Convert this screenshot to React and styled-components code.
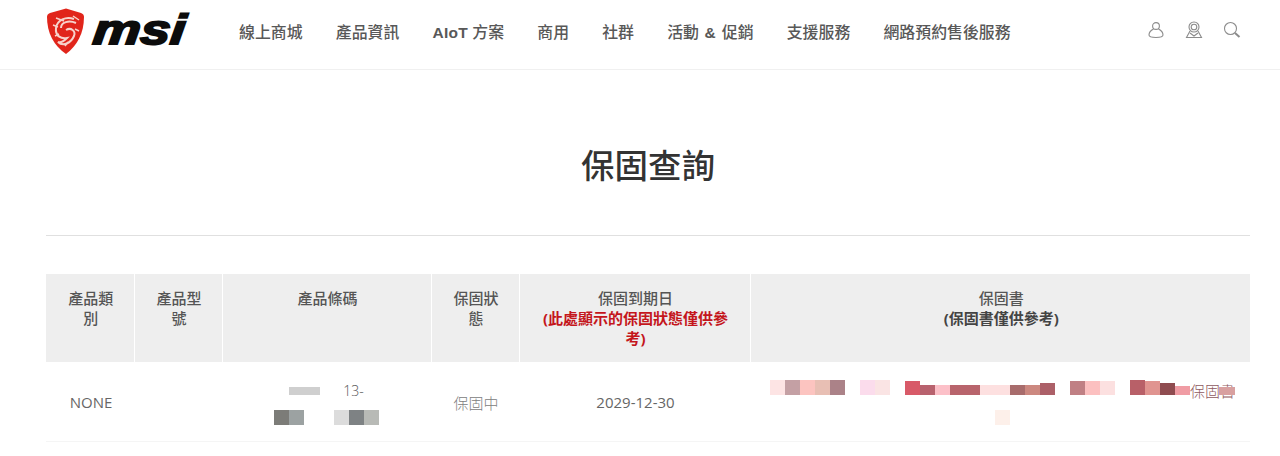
import React from 'react';
import styled, { createGlobalStyle } from 'styled-components';

const GlobalStyle = createGlobalStyle`
  html, body {
    margin: 0;
    padding: 0;
    background: #fff;
    overflow: hidden;
    font-family: "Open Sans", "Noto Sans CJK TC", sans-serif;
  }
`;

const Header = styled.header`
  display: flex;
  align-items: center;
  height: 69px;
  padding: 0 39px 0 46px;
  border-bottom: 1px solid #f0f0f0;
`;

const Logo = styled.svg`
  width: 146px;
  height: 50px;
  flex: none;
  margin-top: -6px;
  overflow: visible;
`;

const Nav = styled.nav`
  display: flex;
  gap: 33.2px;
  margin-left: 47px;
  margin-top: -5px;
  flex: 1;
`;

const NavItem = styled.a`
  font-size: 15.9px;
  line-height: 24px;
  font-weight: 500;
  color: #585858;
  white-space: nowrap;
`;

const Latin = styled.b`
  font-family: "Liberation Sans", sans-serif;
  font-weight: 700;
  font-size: 15.5px;
  letter-spacing: .3px;
  margin: 0 ${p => p.$wide ? 1.5 : 0}px;
`;

const Icons = styled.div`
  display: flex;
  gap: 20px;
  margin-top: -9px;
`;

const IconSvg = styled.svg`
  width: 18px;
  height: 18px;
  fill: none;
  stroke: #8c8c8c;
  stroke-width: 1.1;
`;

const Main = styled.main`
  padding: 0 30px 0 46px;
`;

const Title = styled.h1`
  margin: 0;
  height: 166px;
  box-sizing: border-box;
  padding-top: 71px;
  text-align: center;
  font-size: 33.5px;
  line-height: 48px;
  font-weight: 500;
  color: #333;
  border-bottom: 1px solid #e0e0e0;
`;

const Table = styled.table`
  width: 1204px;
  margin-top: 38px;
  border-collapse: collapse;
  table-layout: fixed;
`;

const Th = styled.th`
  height: 88px;
  box-sizing: border-box;
  padding: 14px 14px 0 16px;
  vertical-align: top;
  background: #eee;
  border-left: 1px solid #fff;
  font-size: 15px;
  line-height: 20px;
  font-weight: 500;
  color: #555;
  &:first-child { border-left: 0; }
`;

const Note = styled.span`
  display: block;
  font-weight: 700;
  color: ${p => p.$red ? '#c4161c' : '#444'};
`;

const Td = styled.td`
  height: 79px;
  padding: 2px 0 0 2px;
  box-sizing: border-box;
  text-align: center;
  vertical-align: middle;
  border-bottom: 1px solid #f5f5f5;
  font-size: 15px;
  color: #666;
`;

const Muted = styled.span`
  font-weight: 300;
  color: #808080;
`;

const Mosaic = styled.div`
  display: flex;
  flex-direction: column;
  align-items: center;
  gap: 15px;
  margin-left: -2px;
`;

const MosaicRow = styled.div`
  position: relative;
  display: flex;
  align-items: flex-end;
  justify-content: ${p => p.$start ? 'flex-start' : 'center'};
  height: 15px;
  width: 100%;
  box-sizing: border-box;
  padding-left: ${p => p.$pad || 0}px;
`;

const Swatch = styled.span`
  flex: none;
  width: ${p => p.$w || 15}px;
  height: ${p => p.$h || 15}px;
  background: ${p => p.$c};
`;

const Fragment = styled.span`
  flex: none;
  font-size: ${p => p.$size || 14}px;
  line-height: 20px;
  margin-bottom: -6px;
  font-weight: 300;
  color: ${p => p.$c || '#555'};
  white-space: nowrap;
`;

const Cover = styled.span`
  position: absolute;
  left: ${p => p.$left}px;
  bottom: 0;
  width: ${p => p.$w}px;
  height: 8px;
  background: ${p => p.$c};
`;

const navItems = [
  '線上商城',
  '產品資訊',
  <><Latin>AIoT</Latin> 方案</>,
  '商用',
  '社群',
  <>活動 <Latin $wide>&amp;</Latin> 促銷</>,
  '支援服務',
  '網路預約售後服務',
];

const certSwatches = [
  ['#fde4e4', 15, 15], ['#c4a0a4', 15, 15], ['#fcc4c0', 15, 15], ['#e8bfb4', 15, 15], ['#ab8288', 15, 15], ['#fff', 15, 15],
  ['#fbdcec', 15, 15], ['#fae4e4', 15, 15], ['#fff', 15, 15],
  ['#d85a68', 15, 14], ['#b8626e', 15, 10], ['#fcc0c8', 15, 10], ['#b8646c', 30, 10], ['#fde0e0', 30, 10],
  ['#a86c6c', 15, 10], ['#cc8880', 15, 10], ['#ac6068', 15, 12], ['#fff', 15, 15],
  ['#c08084', 15, 14], ['#fcc0c0', 15, 14], ['#fce0e0', 15, 14], ['#fff', 15, 15],
  ['#b86068', 15, 15], ['#e09490', 15, 14], ['#8f4c50', 15, 12], ['#f09ca4', 15, 9],
];

export default function App() {
  return (
    <>
      <GlobalStyle />
      <Header>
        <Logo viewBox="0 0 146 50">
          <path d="M4 6 L20 1.5 L35 6 Q38 7 38 10 C38 26 31 39 20 47 C8 39 1 26 1 10 Q1 7 4 6 Z" fill="#e1251b" />
          <path d="M28 12 C20 9 11 13 10 21 C9 29 15 32 21 31 C17 35 15 36 12 35 C17 40 25 36 28 29 C30 24 25 20 20 23 M15 21 C15 15 23 13 30 16" fill="none" stroke="#f7d3cc" strokeWidth="2" />
          <path d="M10 11 L18 14 M27 9 L33 13 M7 18 L12 20 M9 29 L13 27 M29 22 L33 24 M19 39 L22 35" stroke="#f7d3cc" strokeWidth="1.5" fill="none" />
          <text x="50" y="37" transform="skewX(-6)" fontFamily="Liberation Sans, sans-serif" fontWeight="700" fontStyle="italic" fontSize="42" textLength="92" lengthAdjust="spacingAndGlyphs" fill="#0c0c0c" stroke="#0c0c0c" strokeWidth="2">msi</text>
        </Logo>
        <Nav>
          {navItems.map((item, i) => <NavItem key={i}>{item}</NavItem>)}
        </Nav>
        <Icons>
          <IconSvg viewBox="0 0 18 18">
            <circle cx="9" cy="5" r="3.4" />
            <path d="M6.5 8 C3.5 9.5 2 12 2 14 C2 16 5 16.5 9 16.5 C13 16.5 16 16 16 14 C16 12 14.5 9.5 11.5 8" />
          </IconSvg>
          <IconSvg viewBox="0 0 18 18">
            <circle cx="9" cy="6" r="5" />
            <circle cx="9" cy="6" r="2.8" />
            <path d="M5 10 L1.5 16.5 H16.5 L13 10 M5 12 L9 15 L13 12" />
          </IconSvg>
          <IconSvg viewBox="0 0 18 18">
            <circle cx="7.5" cy="7.5" r="6" />
            <path d="M12 12 L16.5 16" strokeWidth="2" />
          </IconSvg>
        </Icons>
      </Header>
      <Main>
        <Title>保固查詢</Title>
        <Table>
          <colgroup>
            <col style={{ width: 88 }} />
            <col style={{ width: 88 }} />
            <col style={{ width: 209 }} />
            <col style={{ width: 88 }} />
            <col style={{ width: 231 }} />
            <col />
          </colgroup>
          <thead>
            <tr>
              <Th>產品類別</Th>
              <Th>產品型號</Th>
              <Th>產品條碼</Th>
              <Th>保固狀態</Th>
              <Th>保固到期日<Note $red>(此處顯示的保固狀態僅供參考)</Note></Th>
              <Th>保固書<Note>(保固書僅供參考)</Note></Th>
            </tr>
          </thead>
          <tbody>
            <tr>
              <Td>NONE</Td>
              <Td />
              <Td>
                <Mosaic>
                  <MosaicRow>
                    <Swatch $c="#cfcfcf" $w={31} $h={8} />
                    <Swatch $c="#fff" $w={23} $h={8} />
                    <Fragment>13-</Fragment>
                  </MosaicRow>
                  <MosaicRow>
                    <Swatch $c="#7c7c78" />
                    <Swatch $c="#9ca2a2" />
                    <Swatch $c="#fff" $w={30} />
                    <Swatch $c="#dcdcdc" />
                    <Swatch $c="#7e8284" />
                    <Swatch $c="#b8bab6" />
                  </MosaicRow>
                </Mosaic>
              </Td>
              <Td><Muted>保固中</Muted></Td>
              <Td>2029-12-30</Td>
              <Td>
                <Mosaic>
                  <MosaicRow $start $pad={20}>
                    {certSwatches.map(([c, w, h], i) => <Swatch key={i} $c={c} $w={w} $h={h} />)}
                    <Fragment $c="#8f5a60" $size={15}>保固書</Fragment>
                    <Cover $left={469} $w={16} $c="#d8a0a0" />
                  </MosaicRow>
                  <MosaicRow $pad={5}><Swatch $c="#fdf0ea" /></MosaicRow>
                </Mosaic>
              </Td>
            </tr>
          </tbody>
        </Table>
      </Main>
    </>
  );
}
